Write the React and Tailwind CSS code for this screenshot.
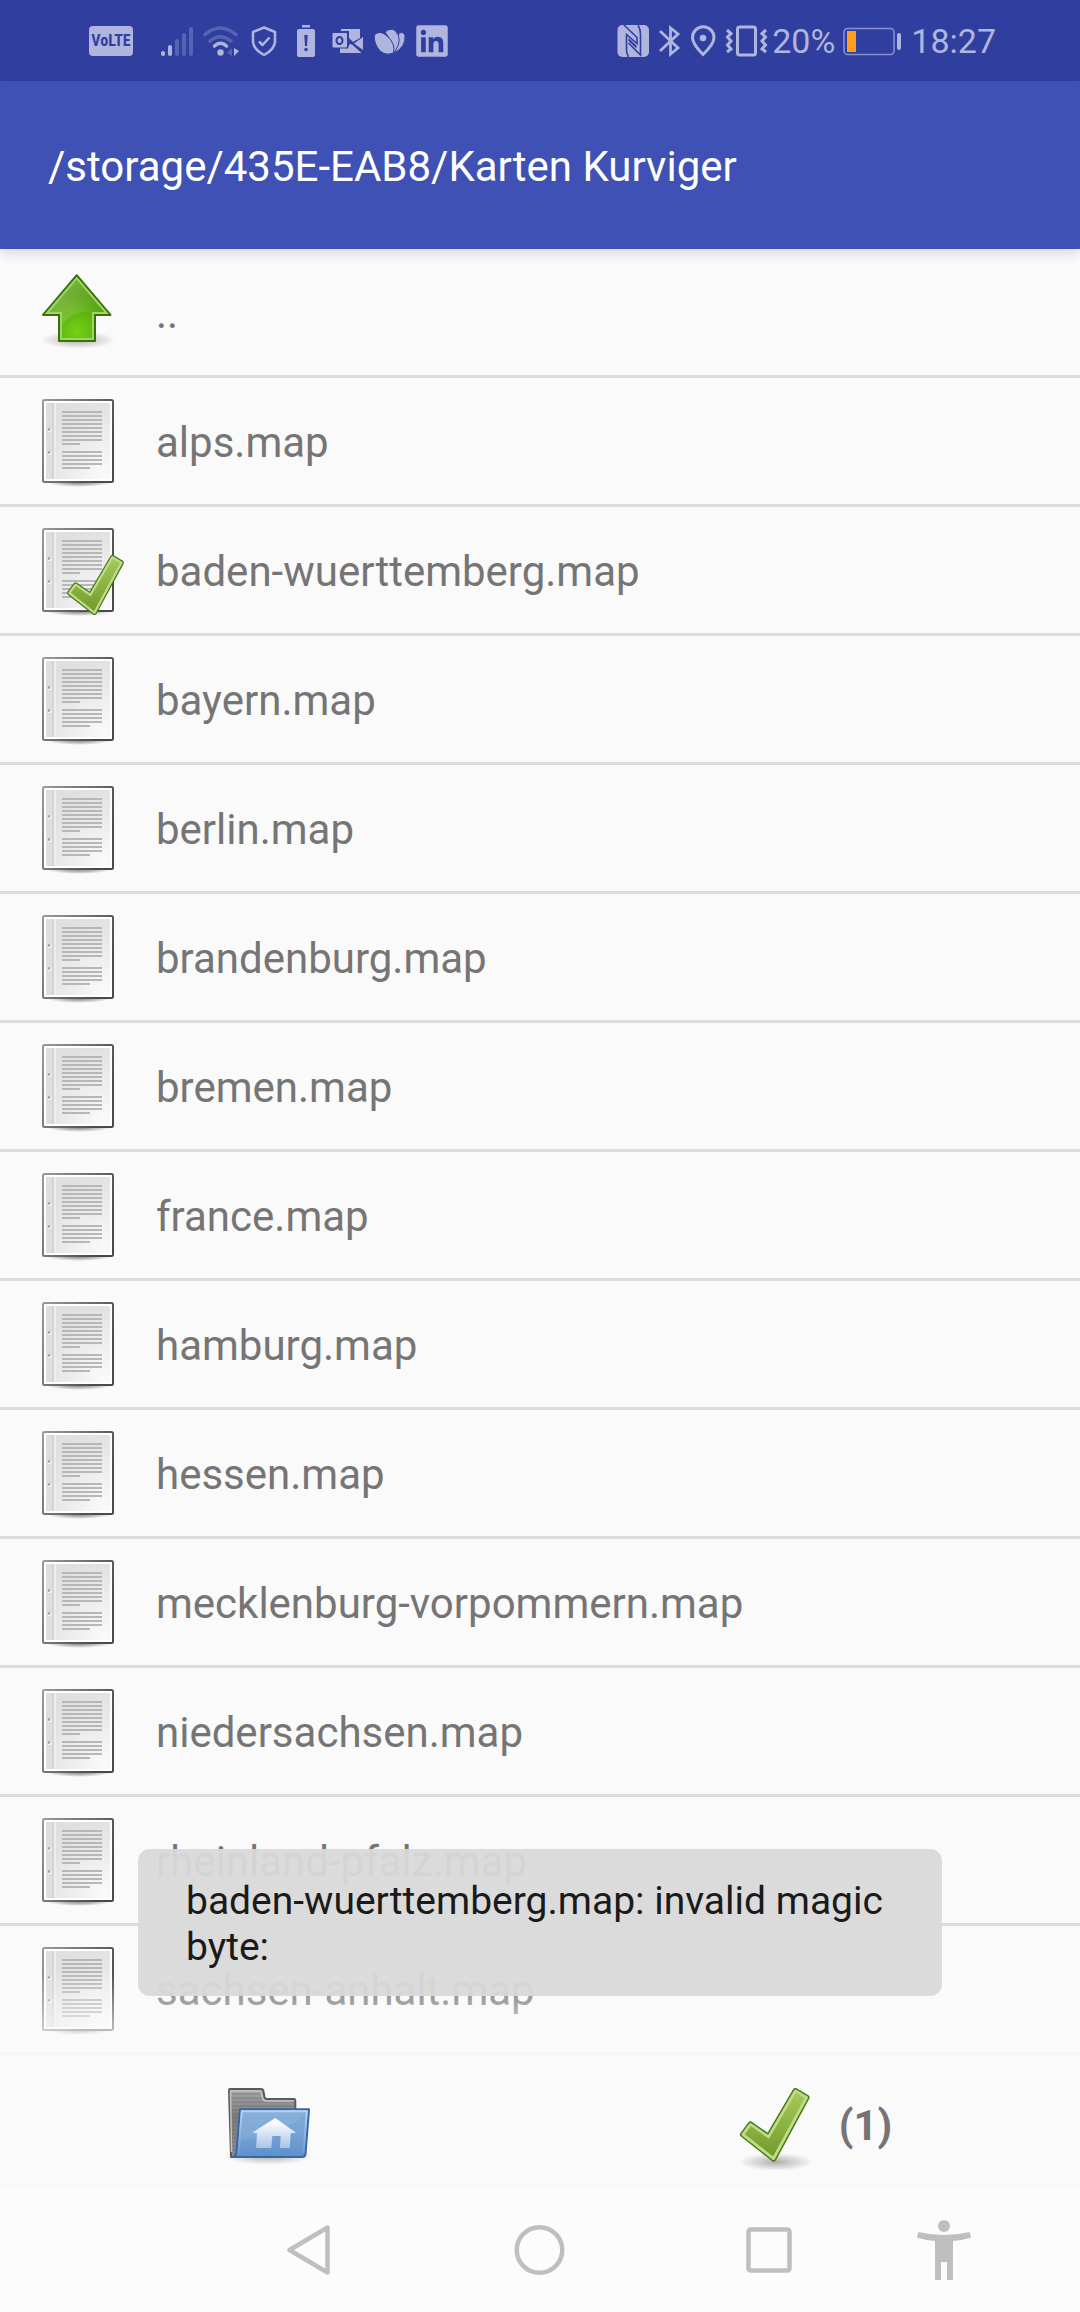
import React, { useState } from 'react';
import { FaLinkedin } from 'react-icons/fa';

const FILES = [
  'alps.map',
  'baden-wuerttemberg.map',
  'bayern.map',
  'berlin.map',
  'brandenburg.map',
  'bremen.map',
  'france.map',
  'hamburg.map',
  'hessen.map',
  'mecklenburg-vorpommern.map',
  'niedersachsen.map',
  'rheinland-pfalz.map',
  'sachsen-anhalt.map',
];

// gradients shared by the icons of the list and the footer
const IconDefs = () => (
  <svg className="absolute w-0 h-0" aria-hidden="true">
    <defs>
      <radialGradient id="shadow">
        <stop offset="0" stopColor="#000" stopOpacity="0.3" />
        <stop offset="1" stopColor="#000" stopOpacity="0" />
      </radialGradient>
      <radialGradient id="arrow" gradientUnits="userSpaceOnUse" cx="47" cy="68" r="38">
        <stop offset="0" stopColor="#73d216" />
        <stop offset="1" stopColor="#4e9a06" />
      </radialGradient>
      <linearGradient id="arrowGloss" x1="0" y1="0" x2="1" y2="0.6">
        <stop offset="0" stopColor="#fff" stopOpacity="0.35" />
        <stop offset="1" stopColor="#fff" stopOpacity="0" />
      </linearGradient>
      <linearGradient id="check" x1="0" y1="0" x2="0" y2="1">
        <stop offset="0" stopColor="#a5c95a" />
        <stop offset="1" stopColor="#739c2c" />
      </linearGradient>
      <linearGradient id="pageBorder" x1="0" y1="0" x2="1" y2="0.5">
        <stop offset="0" stopColor="#9a9a9a" />
        <stop offset="1" stopColor="#4a4a4a" />
      </linearGradient>
      <radialGradient id="page" cx="0.9" cy="0.95" r="1">
        <stop offset="0" stopColor="#fafafa" />
        <stop offset="1" stopColor="#e0e0e0" />
      </radialGradient>
      <linearGradient id="folderBack" x1="0" y1="0" x2="0" y2="1">
        <stop offset="0" stopColor="#aaaaaa" />
        <stop offset="0.4" stopColor="#7c7c7c" />
        <stop offset="1" stopColor="#8a8a8a" />
      </linearGradient>
      <linearGradient id="folderFront" x1="0" y1="0" x2="0" y2="1">
        <stop offset="0" stopColor="#80abd8" />
        <stop offset="0.55" stopColor="#76a2d2" />
        <stop offset="1" stopColor="#5b8fcd" />
      </linearGradient>
      <linearGradient id="house" x1="0" y1="0" x2="0" y2="1">
        <stop offset="0.1" stopColor="#fff" />
        <stop offset="1" stopColor="#a9c5e6" />
      </linearGradient>
      <linearGradient id="folderRim" x1="0" y1="0" x2="0" y2="1">
        <stop offset="0" stopColor="#b5d4f7" />
        <stop offset="1" stopColor="#689bd6" />
      </linearGradient>
    </defs>
  </svg>
);

const CheckShape = () => (
  <g strokeLinejoin="round">
    <path
      d="M67.5 17 L78.5 23.5 L45.5 84.5 L15 60.5 L22.5 50.5 L40.5 63 Z"
      fill="#4e7d1a"
      stroke="#487a18"
      strokeWidth="6"
    />
    <path
      d="M67.5 17 L78.5 23.5 L45.5 84.5 L15 60.5 L22.5 50.5 L40.5 63 Z"
      fill="url(#check)"
      stroke="#bedb88"
      strokeWidth="3"
    />
    <path d="M68 18.8 L76.5 24 L45 82.2 L17 60.2 L23 52.3 L41 65 Z" fill="url(#check)" />
  </g>
);

const UpIcon = () => (
  <svg className="w-24 h-24 shrink-0" viewBox="0 0 96 96" aria-hidden="true">
    <ellipse cx="48" cy="76" rx="37" ry="9" fill="url(#shadow)" />
    <path
      d="M46.7 11.2 L80.5 51 H65 V77 H29 V51 H13 Z"
      fill="url(#arrow)"
      stroke="#3a7304"
      strokeWidth="2"
      strokeLinejoin="round"
    />
    <path d="M46.7 14 L77 49 H63 C50 44 34 54 31 64 V49 H17 Z" fill="url(#arrowGloss)" />
    <path
      d="M46.7 14.2 L76.5 49 H63 V75 H31 V49 H17 Z"
      fill="none"
      stroke="#9fd36b"
      strokeWidth="2"
    />
  </svg>
);

const LONG_LINES = [18, 22, 26, 30, 34, 38, 42, 46, 58, 62, 66, 70];

const FileIcon = ({ selected }) => (
  <svg className="w-24 h-24 shrink-0" viewBox="0 0 96 96" aria-hidden="true">
    <ellipse cx="49" cy="89" rx="33" ry="5" fill="url(#shadow)" />
    <ellipse cx="49" cy="89" rx="33" ry="5" fill="url(#shadow)" />
    <rect x="13" y="7" width="70" height="82" rx="1.5" fill="#fff" stroke="url(#pageBorder)" strokeWidth="2" />
    <rect x="16" y="10" width="64" height="76" fill="url(#page)" />
    <rect x="17" y="10" width="5" height="76" fill="#dedede" />
    <rect x="22" y="10" width="2" height="76" fill="#d4d4d4" />
    <rect x="24" y="10" width="2" height="76" fill="#ededed" />
    <circle cx="19.5" cy="37" r="2" fill="#fff" />
    <circle cx="19" cy="36.5" r="1.4" fill="#a5a5a5" />
    <circle cx="19.5" cy="60" r="2" fill="#fff" />
    <circle cx="19" cy="59.5" r="1.4" fill="#a5a5a5" />
    <g fill="#b7b7b7">
      {LONG_LINES.map((y) => (
        <rect key={y} x="32" y={y} width="40" height="2" />
      ))}
      <rect x="32" y="50" width="18" height="2" />
      <rect x="32" y="74" width="28" height="2" />
    </g>
    {selected && (
      <g transform="translate(27.2 21.5) scale(0.818)">
        <CheckShape />
      </g>
    )}
  </svg>
);

const HomeFolderIcon = () => (
  <svg className="w-24 h-24" viewBox="0 0 96 96" aria-hidden="true">
    <ellipse cx="46" cy="82" rx="45" ry="9" fill="url(#shadow)" />
    <path
      d="M9 83 L7 16 Q7 15 8 15 H39 Q41 15 41.4 17 L42.5 23 Q43 25 45 25 H72 Q73.3 25 73.3 26.5 V83 Z"
      fill="url(#folderBack)"
      stroke="#5a5a58"
      strokeWidth="2"
      strokeLinejoin="round"
    />
    <g stroke="#6a6a6a" strokeOpacity="0.6">
      {[20, 24, 28, 32, 36, 40, 44, 48, 52, 56, 60, 64, 68, 72, 76].map((y) => (
        <path key={y} d={`M10 ${y} H${y < 26 ? 40 : 72}`} />
      ))}
    </g>
    <path d="M9.5 78 L8.5 17 H38 Q39 17 40 22 Q41 27 44 27 H72" fill="none" stroke="#c4c4c4" strokeWidth="1.5" />
    <path
      d="M18 35.3 H87 L83.5 80 Q83 83 80 83 H11 Q14 82 14.5 78 Z"
      fill="url(#folderFront)"
      stroke="#3a66a3"
      strokeWidth="2"
      strokeLinejoin="round"
    />
    <path d="M17 67 C40 62 72 56 84 38 H20 Z" fill="#fff" fillOpacity="0.07" />
    <path d="M16.5 80 L19.8 37.3 H84.8 L81.5 79" fill="none" stroke="url(#folderRim)" strokeWidth="2" />
    <path
      d="M53.3 44 L74 58.7 L68.7 59.3 L67.7 74 H58 L58.7 62 H50.3 L49.3 74 H34 L35 59.3 L30.3 58.7 Z"
      fill="url(#house)"
    />
  </svg>
);

const StatusBar = () => (
  <div className="h-[81px] bg-[#303f9f] pl-[89px] pr-[84px] flex items-center justify-between text-[#b0b5dd]">
    <div className="flex items-center gap-2">
      <span className="w-11 h-[30px] rounded bg-[#b0b5dd] text-[#303f9f] text-[16px] leading-[30px] font-bold text-center font-['Roboto_Condensed','Liberation_Sans_Narrow',sans-serif]">
        VoLTE
      </span>
      <svg className="w-[53px] h-8" viewBox="0 0 53 32" fill="none" stroke="currentColor" strokeWidth="4" strokeLinecap="round">
        <path d="M22 28 V29" />
        <path d="M29 22 V29" />
        <path d="M36 16 V29 M43 10 V29 M50 4 V29" strokeOpacity="0.3" />
      </svg>
      <svg className="w-[38px] h-8" viewBox="0 0 38 32" fill="none" stroke="currentColor" strokeWidth="3.5" strokeLinecap="round">
        <path d="M3 9.5 Q18 -3.5 34 9.5" strokeOpacity="0.3" />
        <path d="M8 16 Q18 7.5 29 16" strokeOpacity="0.3" />
        <path d="M12.5 21 Q18.5 15.5 24.5 21" />
        <circle cx="18.5" cy="27.5" r="3.2" fill="currentColor" stroke="none" />
        <path d="M30 23 V31 L25 28 Z" fill="currentColor" fillOpacity="0.3" stroke="none" />
        <path d="M32 23 L37 26 L32 31 Z" fill="currentColor" stroke="none" />
      </svg>
      <svg className="w-8 h-8" viewBox="0 0 32 32" fill="none" stroke="currentColor" strokeWidth="2.5" strokeLinejoin="round">
        <path d="M16 2.5 L27 7 V17 Q26 25 16 30 Q6 25 5 17 V7 Z" />
        <path d="M11 16.5 L14.5 20 L21.5 12.5" />
      </svg>
      <svg className="w-9 h-8" viewBox="0 0 36 32">
        <rect x="14" y="0" width="8" height="2.5" fill="currentColor" />
        <rect x="9" y="4" width="18" height="28" rx="2" fill="currentColor" />
        <path d="M16.3 10 H19.7 L19 21 H17 Z" fill="#303f9f" />
        <circle cx="18" cy="24.5" r="1.7" fill="#303f9f" />
      </svg>
      <svg className="w-8 h-8" viewBox="0 0 32 32">
        <path d="M9 4 H28 V13 L21 17 L17 13 V6 H9 Z" fill="currentColor" />
        <path d="M31 12 V25 L22 18.5 Z" fill="currentColor" />
        <path d="M8 23.5 H16 L17.5 19 L20 19.5 L29.5 28 H8 Z" fill="currentColor" />
        <rect x="0.5" y="8" width="14.5" height="14.5" rx="1" fill="currentColor" />
        <ellipse cx="7.5" cy="15.5" rx="3" ry="3.5" fill="none" stroke="#303f9f" strokeWidth="2" />
      </svg>
      <svg className="w-9 h-8" viewBox="0 0 36 32" fill="currentColor" stroke="#303f9f" strokeWidth="1">
        <path d="M27 8 Q31 6 33 10 Q34 22 22 28 Q24 18 27 8 Z" />
        <path d="M13 7 Q18 2.5 23 5.5 Q32 14 22 28 Q20 16 13 7 Z" />
        <path d="M3 9 Q9 5 15 11 Q24 19 21.5 28 Q11 32 5 22 Q1 14 3 9 Z" />
      </svg>
      <FaLinkedin className="w-8 h-9" />
    </div>
    <div className="flex items-center gap-1 text-[34px] leading-10">
      <svg className="w-9 h-8" viewBox="0 0 36 32">
        <rect x="1.5" y="0" width="31.5" height="32" rx="5" fill="currentColor" />
        <g fill="none" stroke="#303f9f" strokeWidth="1.6">
          <path d="M8 0 L21 12.5 V18.5 L10.5 9.5 V25 Q10.5 28 12.5 32" />
          <path d="M22 0 Q24.5 4 24.5 10 V30 L12.5 18" />
        </g>
        <path d="M12.5 13 L20.5 20.5 V23.5 L12.5 16 Z" fill="#303f9f" />
      </svg>
      <svg className="w-7 h-8" viewBox="0 0 28 32" fill="none" stroke="currentColor" strokeWidth="2.8">
        <path d="M4 6 L22 23 L14.5 29 V3 L22 9 L4 26" />
      </svg>
      <svg className="w-8 h-8" viewBox="0 0 32 32" fill="none" stroke="currentColor" strokeWidth="3">
        <path d="M15 29.5 Q4.5 19 4.5 12.5 A10.5 10.5 0 0 1 26 12.5 Q26 19 15 29.5 Z" />
        <circle cx="15" cy="13" r="3.3" fill="currentColor" stroke="none" />
      </svg>
      <svg className="w-11 h-8" viewBox="0 0 44 32" fill="none" stroke="currentColor" strokeWidth="3">
        <rect x="13.5" y="2" width="18" height="28" rx="2" />
        <path d="M3 5 L7 8.5 L3.5 12 L7 16 L3.5 20 L7 24 L3 27" />
        <path d="M42 5 L38 8.5 L41.5 12 L38 16 L41.5 20 L38 24 L42 27" />
      </svg>
      <span>20%</span>
      <svg className="w-[68px] h-8" viewBox="0 0 68 32">
        <rect x="5" y="3.5" width="50" height="26" rx="3.5" fill="none" stroke="currentColor" strokeOpacity="0.7" strokeWidth="1.5" />
        <rect x="8" y="6" width="9" height="21" fill="#ff9d1e" />
        <rect x="58" y="8" width="4" height="17" rx="2" fill="currentColor" />
      </svg>
      <span>18:27</span>
    </div>
  </div>
);

const NavBar = () => (
  <nav className="h-[124px] bg-[#fcfcfc] pl-[18%] pr-[7%] grid grid-cols-[23fr_23fr_23fr_12fr] place-items-center text-[#bfbfbf]">
    <button aria-label="Back">
      <svg className="w-[60px] h-[60px]" viewBox="0 0 60 60" fill="none" stroke="currentColor" strokeWidth="4.5">
        <path d="M48.5 7.5 V52.5 L10.5 30 Z" strokeLinejoin="round" />
      </svg>
    </button>
    <button aria-label="Home">
      <svg className="w-[60px] h-[60px]" viewBox="0 0 60 60" fill="none" stroke="currentColor" strokeWidth="4.5">
        <circle cx="30.5" cy="30" r="22.75" />
      </svg>
    </button>
    <button aria-label="Recent apps">
      <svg className="w-[60px] h-[60px]" viewBox="0 0 60 60" fill="none" stroke="currentColor" strokeWidth="4.5">
        <rect x="9.5" y="9.5" width="41" height="41" rx="2" />
      </svg>
    </button>
    <button aria-label="Accessibility">
      <svg className="w-[60px] h-[60px]" viewBox="0 0 60 60" fill="currentColor">
        <circle cx="30" cy="6" r="6" />
        <path d="M4.3 12 Q30 18 55.7 12 L57 17.7 Q48 20.3 39 21 V60 H33 V42 H27 V60 H21 V21 Q12 20.3 3 17.7 Z" />
      </svg>
    </button>
  </nav>
);

const App = () => {
  const [selected, setSelected] = useState(['baden-wuerttemberg.map']);

  const toggle = (name) => {
    setSelected((prev) =>
      prev.includes(name) ? prev.filter((n) => n !== name) : [...prev, name]
    );
  };

  return (
    <div className="relative min-h-screen flex flex-col bg-[#fafafa] font-[Roboto,sans-serif] text-[#757575]">
      <IconDefs />
      <StatusBar />
      <header className="relative z-10 h-[168px] px-12 flex items-center bg-[#3f51b5] shadow-[0_4px_12px_rgba(0,0,0,0.15)]">
        <h1 className="pt-1 text-[42px] leading-[50px] text-white">/storage/435E-EAB8/Karten Kurviger</h1>
      </header>

      <main className="relative flex-1">
        <ul className="text-[42px] leading-[50px]">
          <li className="border-b-3 border-[#dcdcdc]">
            <button className="w-full flex items-center gap-[30px] p-[15px] pl-[30px] text-left">
              <UpIcon />
              <span className="pt-1">..</span>
            </button>
          </li>
          {FILES.map((name) => (
            <li key={name} className="border-b-3 border-[#dcdcdc]">
              <button
                onClick={() => toggle(name)}
                className="w-full flex items-center gap-[30px] p-[15px] pl-[30px] text-left"
              >
                <FileIcon selected={selected.includes(name)} />
                <span className="pt-1">{name}</span>
              </button>
            </li>
          ))}
        </ul>
        {/* fading edge of the scroll area */}
        <div className="absolute inset-x-0 bottom-0 h-[84px] bg-linear-to-b from-[#fafafa]/0 to-[#fafafa]/90 pointer-events-none" />
      </main>

      <footer className="h-[133px] grid grid-cols-2">
        <button aria-label="Home folder" className="flex items-center justify-center">
          <HomeFolderIcon />
        </button>
        <button aria-label="Confirm selection" className="flex items-center justify-center gap-[15px]">
          <svg className="w-24 h-24" viewBox="0 0 96 96" aria-hidden="true">
            <ellipse cx="48" cy="88" rx="37" ry="9" fill="url(#shadow)" />
            <CheckShape />
          </svg>
          <span className="pt-2 text-[42px] leading-[50px] font-bold">({selected.length})</span>
        </button>
      </footer>

      <NavBar />

      <div
        role="status"
        className="absolute z-20 inset-x-[138px] bottom-[316px] rounded-xl bg-[#d9d9d9]/95 px-12 pt-[29px] pb-[26px] text-[39px] leading-[46px] text-[#1a1a1a]"
      >
        baden-wuerttemberg.map: invalid magic byte:
      </div>
    </div>
  );
};

export default App;
